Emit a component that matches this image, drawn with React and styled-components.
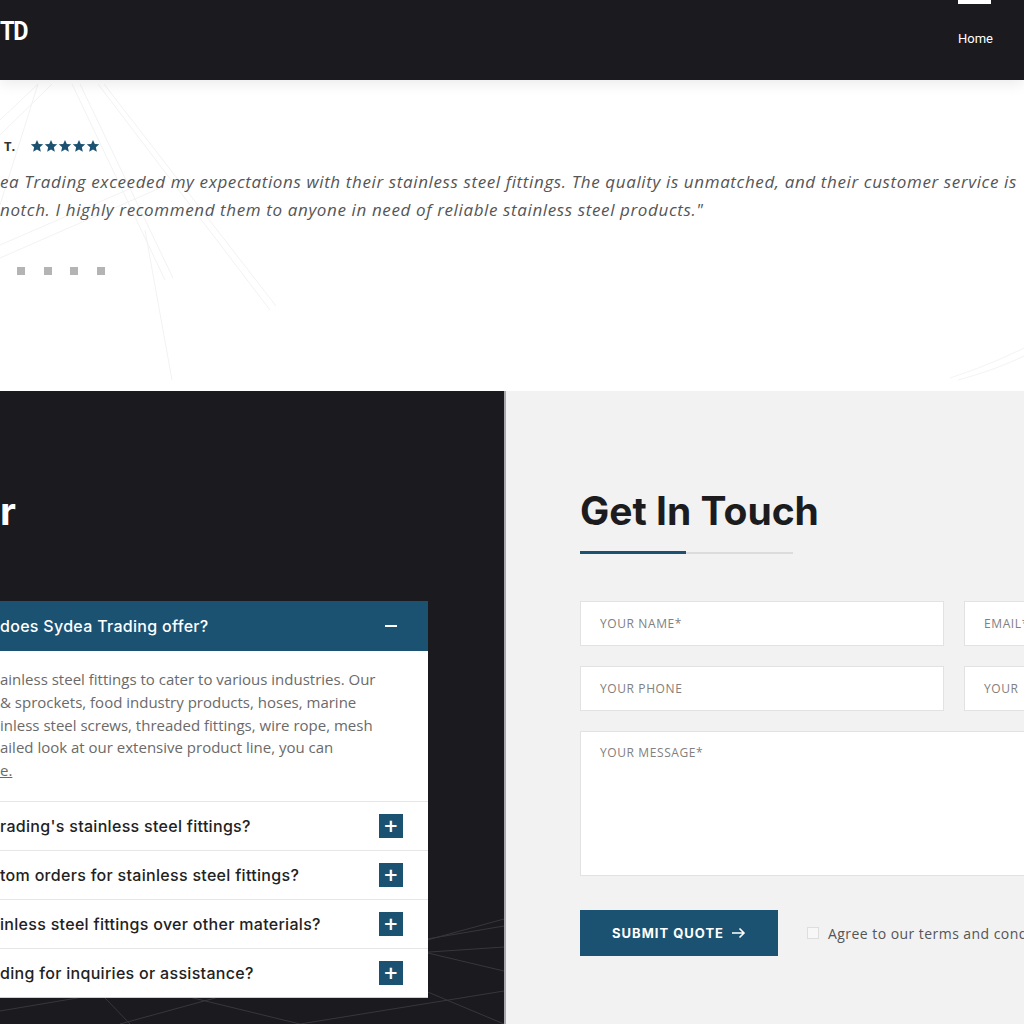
import styled, { createGlobalStyle } from "styled-components";

const BLUE = "#1b5272";
const DARK = "#1b1a1f";

const GlobalStyle = createGlobalStyle`
  html, body {
    margin: 0;
    padding: 0;
    background: #fff;
  }
  body {
    width: 1024px;
    height: 1024px;
    overflow: hidden;
    font-family: "Open Sans", "Liberation Sans", sans-serif;
  }
  * {
    box-sizing: border-box;
  }
`;

const Star = () => (
  <svg width="14" height="14" viewBox="0 0 24 24">
    <path
      fill={BLUE}
      d="M12 1.5l3.1 7 7.6.7-5.8 5.1 1.7 7.5L12 17.9l-6.6 3.9 1.7-7.5L1.3 9.2l7.6-.7z"
    />
  </svg>
);

const Arrow = () => (
  <svg width="15" height="12" viewBox="0 0 15 12" fill="none">
    <path d="M1 6h12M8.5 1.5L13 6l-4.5 4.5" stroke="#fff" strokeWidth="1.6" />
  </svg>
);

const questions = [
  "rading's stainless steel fittings?",
  "tom orders for stainless steel fittings?",
  "inless steel fittings over other materials?",
  "ding for inquiries or assistance?",
];

const App = () => {
  return (
    <Page>
      <GlobalStyle />
      <Header>
        <Logo>TD</Logo>
        <Nav>
          <NavItem>Home</NavItem>
        </Nav>
      </Header>

      <Testimonial>
        <Decor width="1024" height="311" viewBox="0 0 1024 311">
          <g stroke="#f2f2f2" strokeWidth="1" fill="none">
            <path d="M38 4 L0 40" />
            <path d="M52 4 L0 55" />
            <path d="M0 165 L150 100" />
            <path d="M0 178 L160 108" />
            <path d="M72 4 L165 200" />
            <path d="M80 4 L173 198" />
            <path d="M98 4 L270 230" />
            <path d="M104 4 L276 226" />
            <path d="M145 150 L172 300" />
            <path d="M0 125 L38 4" />
          </g>
          <g stroke="#f5f5f5" strokeWidth="1.2" fill="none">
            <path d="M950 298 Q 990 285 1024 268" />
            <path d="M958 300 Q 995 290 1024 276" />
          </g>
        </Decor>
        <Inner>
          <Reviewer>
            <Name>T.</Name>
            <Stars>
              <Star />
              <Star />
              <Star />
              <Star />
              <Star />
            </Stars>
          </Reviewer>
          <Quote>
            <QuoteLine>
              ea Trading exceeded my expectations with their stainless steel
              fittings. The quality is unmatched, and their customer service is
            </QuoteLine>
            <QuoteLine>
              notch. I highly recommend them to anyone in need of reliable
              stainless steel products."
            </QuoteLine>
          </Quote>
          <Dots>
            <Dot />
            <Dot />
            <Dot />
            <Dot />
          </Dots>
        </Inner>
      </Testimonial>

      <Lower>
        <FaqPanel>
          <Decor width="504" height="633" viewBox="0 0 504 633">
            <g stroke="#37373c" strokeWidth="1" fill="none">
              <path d="M0 620 L504 535" />
              <path d="M0 590 L504 556" />
              <path d="M120 633 L504 528" />
              <path d="M250 520 L504 580" />
              <path d="M0 560 L300 633" />
              <path d="M300 633 L504 600" />
              <path d="M60 560 L130 633" />
              <path d="M330 560 L504 633" />
            </g>
          </Decor>
          <FaqTitle>r</FaqTitle>
          <Accordion>
            <ItemHead $open>
              <span>does Sydea Trading offer?</span>
              <Minus />
            </ItemHead>
            <ItemBody>
              <BodyLine>ainless steel fittings to cater to various industries. Our</BodyLine>
              <BodyLine>&amp; sprockets, food industry products, hoses, marine</BodyLine>
              <BodyLine>inless steel screws, threaded fittings, wire rope, mesh</BodyLine>
              <BodyLine>ailed look at our extensive product line, you can</BodyLine>
              <BodyLine>
                <u>e.</u>
              </BodyLine>
            </ItemBody>
            {questions.map((q) => (
              <ItemHead key={q}>
                <span>{q}</span>
                <PlusBox>+</PlusBox>
              </ItemHead>
            ))}
          </Accordion>
        </FaqPanel>

        <ContactPanel>
          <Heading>Get In Touch</Heading>
          <Underline>
            <span />
          </Underline>
          <Form>
            <Field>YOUR NAME*</Field>
            <Field>EMAIL*</Field>
            <Field>YOUR PHONE</Field>
            <Field>YOUR</Field>
            <Message>YOUR MESSAGE*</Message>
          </Form>
          <Actions>
            <Submit>
              SUBMIT QUOTE <Arrow />
            </Submit>
            <Agree>
              <Check />
              Agree to our terms and conditions
            </Agree>
          </Actions>
        </ContactPanel>
      </Lower>
    </Page>
  );
};

const Page = styled.div`
  width: 1024px;
  height: 1024px;
  overflow: hidden;
  display: flex;
  flex-direction: column;
`;

const Header = styled.header`
  height: 80px;
  flex: none;
  background: ${DARK};
  display: flex;
  justify-content: space-between;
  align-items: flex-start;
  position: relative;
  z-index: 2;
  box-shadow: 0 3px 14px rgba(0, 0, 0, 0.09);
`;

const Logo = styled.div`
  margin-top: 16px;
  color: #fff;
  font-family: Roboto, "Liberation Sans", sans-serif;
  font-weight: 700;
  font-size: 26px;
  letter-spacing: -1.5px;
  transform: scaleX(0.9);
  transform-origin: left;
`;

const Nav = styled.nav`
  display: flex;
  padding-right: 31px;
`;

const NavItem = styled.a`
  display: flex;
  flex-direction: column;
  color: #fff;
  font-family: Roboto, "Liberation Sans", sans-serif;
  font-size: 13px;
  font-weight: 400;

  &::before {
    content: "";
    width: 33px;
    height: 4px;
    background: #fff;
    margin-bottom: 27px;
  }
`;

const Testimonial = styled.section`
  height: 311px;
  flex: none;
  background: #fff;
  position: relative;
  overflow: hidden;
`;

const Decor = styled.svg`
  position: absolute;
  left: 0;
  top: 0;
  pointer-events: none;
`;

const Inner = styled.div`
  position: relative;
  padding-top: 57px;
`;

const Reviewer = styled.div`
  display: flex;
  align-items: center;
  height: 18px;
  padding-left: 4px;
  gap: 15px;
`;

const Name = styled.span`
  font-family: "Open Sans", sans-serif;
  font-weight: 700;
  font-size: 13px;
  color: #333;
`;

const Stars = styled.div`
  display: flex;
`;

const Quote = styled.div`
  margin-top: 13px;
`;

const QuoteLine = styled.div`
  white-space: nowrap;
  font-family: "Open Sans", sans-serif;
  font-style: italic;
  font-size: 17px;
  letter-spacing: 0.62px;
  line-height: 28px;
  color: #555;
`;

const Dots = styled.div`
  display: flex;
  gap: 18.5px;
  margin-top: 43px;
  padding-left: 17px;
`;

const Dot = styled.span`
  width: 8px;
  height: 8px;
  background: #b4b4b4;
`;

const Lower = styled.div`
  flex: 1;
  display: grid;
  grid-template-columns: 506px 1fr;
`;

const FaqPanel = styled.div`
  position: relative;
  background: ${DARK};
  border-right: 2px solid #a9a9ad;
  padding: 100px 76px 0 0;
  overflow: hidden;
`;

const FaqTitle = styled.h2`
  position: relative;
  margin: 0;
  color: #fff;
  font-family: Inter, "Open Sans", sans-serif;
  font-weight: 700;
  font-size: 39px;
  line-height: 40px;
`;

const Accordion = styled.div`
  position: relative;
  margin-top: 70px;
  background: #fff;
  border-bottom: 1px solid #cfcfcf;
`;

const ItemHead = styled.div`
  height: ${(p) => (p.$open ? "50px" : "49px")};
  display: flex;
  align-items: center;
  justify-content: space-between;
  padding-right: 25px;
  white-space: nowrap;
  background: ${(p) => (p.$open ? BLUE : "#fff")};
  color: ${(p) => (p.$open ? "#fff" : "#222")};
  border-top: ${(p) => (p.$open ? "none" : "1px solid #e6e6e6")};
  font-family: Inter, "Open Sans", sans-serif;
  font-weight: 500;
  font-size: 16px;
  letter-spacing: 0.3px;
`;

const Minus = styled.span`
  width: 12px;
  height: 2px;
  background: #fff;
  margin-right: 6px;
`;

const PlusBox = styled.span`
  width: 24px;
  height: 24px;
  background: ${BLUE};
  color: #fff;
  display: flex;
  align-items: center;
  justify-content: center;
  font-family: "DejaVu Sans", sans-serif;
  font-weight: 700;
  font-size: 18px;
  line-height: 1;
`;

const ItemBody = styled.div`
  padding: 17px 0 19px;
`;

const BodyLine = styled.div`
  white-space: nowrap;
  font-family: "Open Sans", sans-serif;
  font-size: 15px;
  line-height: 22.8px;
  color: #6a6a6a;
`;

const ContactPanel = styled.div`
  background: #f2f2f2;
  padding: 95px 0 0 74px;
  overflow: hidden;
`;

const Heading = styled.h2`
  margin: 0;
  font-family: Inter, "Open Sans", sans-serif;
  font-weight: 700;
  font-size: 39px;
  line-height: 50px;
  color: #1c1c1e;
  white-space: nowrap;
`;

const Underline = styled.div`
  margin-top: 16px;
  width: 213px;
  height: 2px;
  background: #dcdcdc;
  position: relative;

  span {
    position: absolute;
    left: 0;
    top: -1px;
    width: 106px;
    height: 3px;
    background: ${BLUE};
  }
`;

const Form = styled.div`
  margin-top: 47px;
  width: 748px;
  display: grid;
  grid-template-columns: 364px 364px;
  column-gap: 20px;
  row-gap: 20px;
`;

const Field = styled.div`
  height: 45px;
  background: #fff;
  border: 1px solid #e2e2e2;
  padding: 0 19px;
  display: flex;
  align-items: center;
  font-family: "Open Sans", sans-serif;
  font-size: 12px;
  letter-spacing: 0.6px;
  color: #808080;
  white-space: nowrap;
`;

const Message = styled(Field)`
  grid-column: 1 / -1;
  height: 145px;
  align-items: flex-start;
  padding-top: 12px;
`;

const Actions = styled.div`
  margin-top: 34px;
  display: flex;
  align-items: center;
  white-space: nowrap;
`;

const Submit = styled.button`
  flex: none;
  width: 198px;
  height: 46px;
  border: none;
  background: ${BLUE};
  color: #fff;
  display: flex;
  align-items: center;
  justify-content: center;
  gap: 7px;
  font-family: Inter, "Open Sans", sans-serif;
  font-weight: 700;
  font-size: 13px;
  letter-spacing: 1px;
  cursor: pointer;
`;

const Agree = styled.label`
  margin-left: 29px;
  display: flex;
  align-items: center;
  gap: 9px;
  font-family: "Open Sans", sans-serif;
  font-size: 14px;
  letter-spacing: 0.45px;
  color: #555;
`;

const Check = styled.span`
  flex: none;
  width: 12px;
  height: 12px;
  border: 1px solid #dedede;
  background: #f7f7f7;
`;

export default App;
